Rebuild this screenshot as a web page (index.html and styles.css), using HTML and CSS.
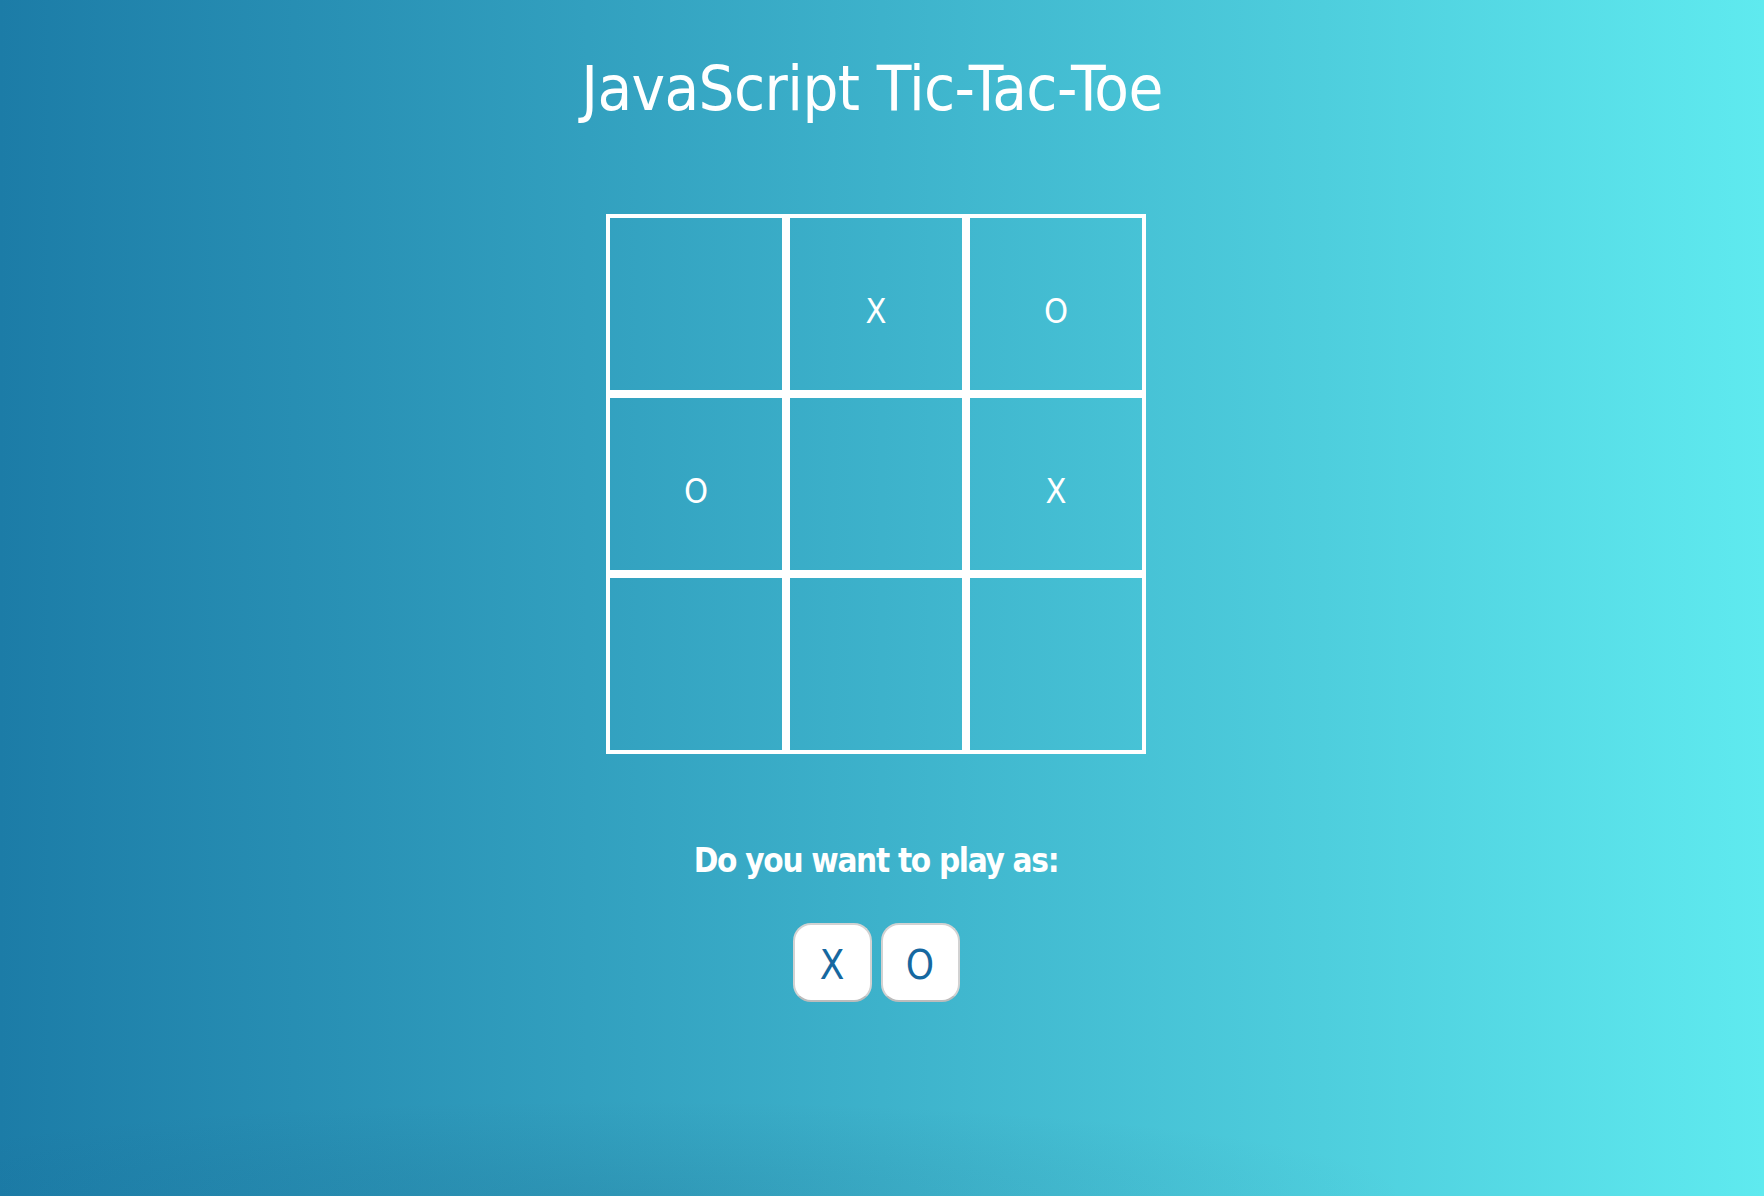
FILE: index.html
```html
<!DOCTYPE html>
<html lang="en">
<head>
<meta charset="utf-8">
<title>JavaScript Tic-Tac-Toe</title>
<link rel="stylesheet" href="styles.css">
</head>
<body>
<main class="app">
  <h1 class="title">JavaScript Tic-Tac-Toe</h1>
  <div class="board">
    <div class="cell"></div>
    <div class="cell">X</div>
    <div class="cell">O</div>
    <div class="cell">O</div>
    <div class="cell"></div>
    <div class="cell">X</div>
    <div class="cell"></div>
    <div class="cell"></div>
    <div class="cell"></div>
  </div>
  <p class="prompt">Do you want to play as:</p>
  <div class="choices">
    <button class="choice">X</button>
    <button class="choice">O</button>
  </div>
</main>
</body>
</html>
```

FILE: styles.css
```css
html, body {
  margin: 0;
  padding: 0;
  height: 100%;
}

body {
  background:
    radial-gradient(ellipse 45% 8% at 35% 100%, rgba(10, 60, 100, 0.12), rgba(10, 60, 100, 0) 100%),
    linear-gradient(to right, #1c7ca7 0%, #3db2cb 50%, #5feaef 100%);
  font-family: "Liberation Sans Narrow", "DejaVu Sans Condensed", "Liberation Sans", sans-serif;
  color: #fff;
  overflow: hidden;
}

.app {
  display: flex;
  flex-direction: column;
  align-items: center;
  padding: 0 12px 0 0;
}

.title {
  margin: 47px 0 0;
  font-size: 63px;
  font-weight: 400;
  line-height: 84px;
  letter-spacing: -0.6px;
  padding-right: 8px;
}

.board {
  margin-top: 83px;
  display: grid;
  grid-template-columns: repeat(3, 180px);
  grid-template-rows: repeat(3, 180px);
}

.cell {
  box-sizing: border-box;
  border: 4px solid #fff;
  display: flex;
  align-items: center;
  justify-content: center;
  padding-top: 14px;
  font-size: 34px;
  font-weight: 400;
}

.prompt {
  margin: 84px 0 0;
  font-size: 33px;
  font-weight: 700;
  line-height: 46px;
  letter-spacing: -1.3px;
}

.choices {
  margin-top: 39px;
  display: flex;
  gap: 9px;
}

.choice {
  box-sizing: border-box;
  width: 79px;
  height: 79px;
  border: 2px solid #d2d2d2;
  border-bottom-color: #bcbcbc;
  border-radius: 18px;
  background: #fff;
  color: #1668a0;
  font-family: inherit;
  font-size: 40px;
  font-weight: 400;
  padding: 4px 0 0;
  cursor: pointer;
}
```
